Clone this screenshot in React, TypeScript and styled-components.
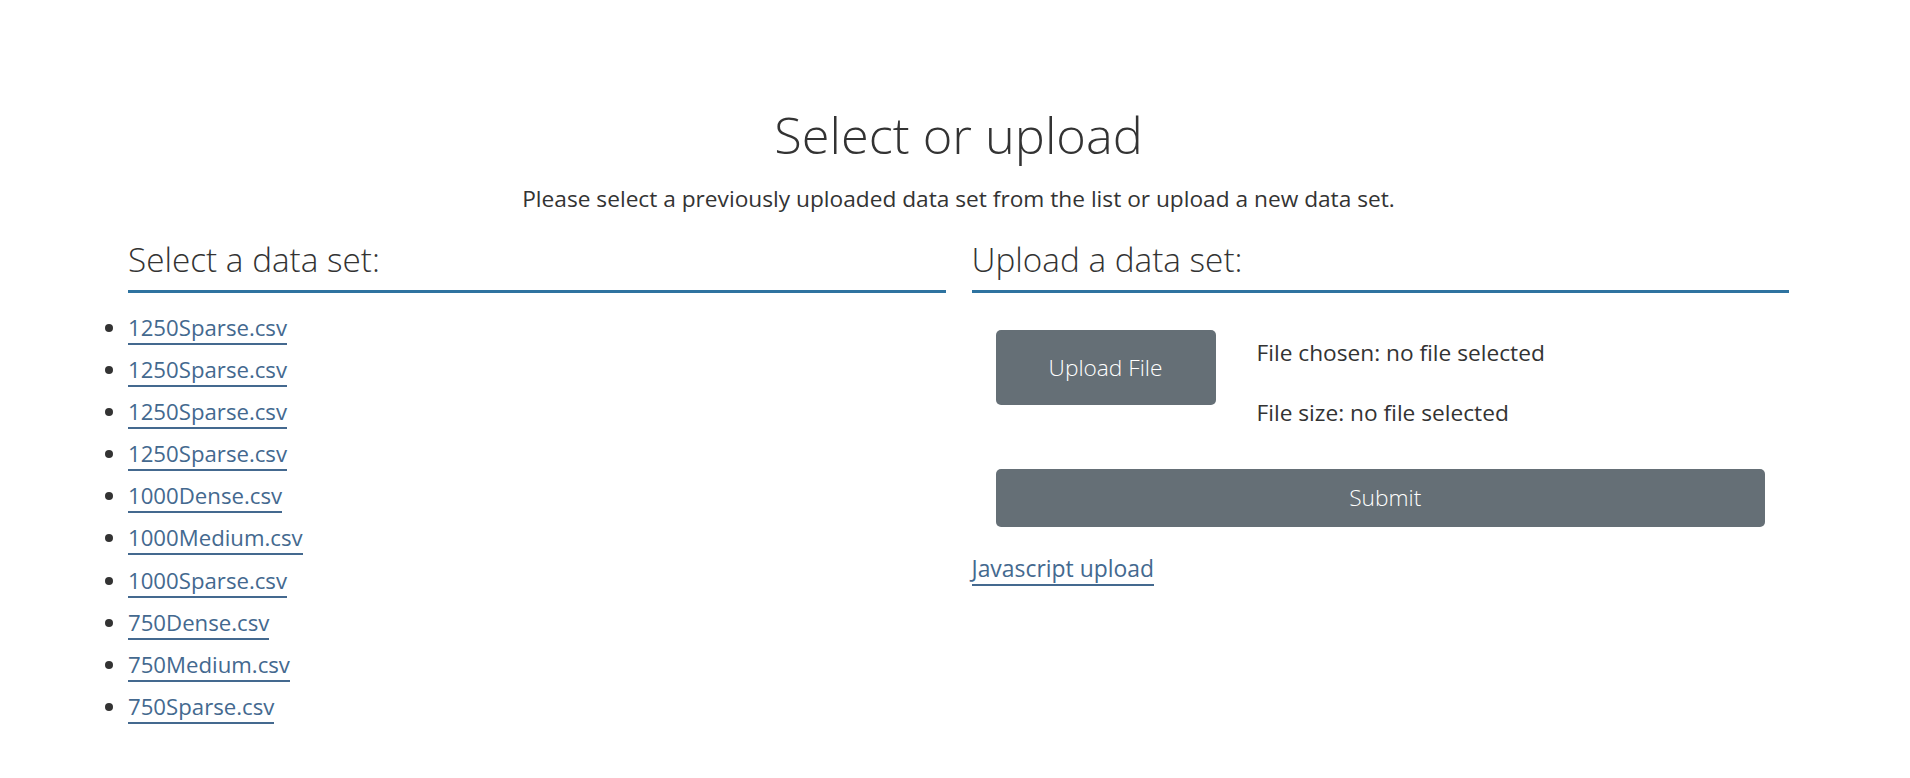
import styled, { createGlobalStyle } from 'styled-components';

const GlobalStyle = createGlobalStyle`
  body {
    margin: 0;
    background: #fff;
    color: #333;
    font-family: 'Open Sans', 'Noto Sans', sans-serif;
  }
`;

const dataSets = [
  '1250Sparse.csv',
  '1250Sparse.csv',
  '1250Sparse.csv',
  '1250Sparse.csv',
  '1000Dense.csv',
  '1000Medium.csv',
  '1000Sparse.csv',
  '750Dense.csv',
  '750Medium.csv',
  '750Sparse.csv',
];

function App() {
  return (
    <Page>
      <GlobalStyle />
      <Title>Select or upload</Title>
      <Lead>Please select a previously uploaded data set from the list or upload a new data set.</Lead>
      <Columns>
        <section>
          <SectionHeading>Select a data set:</SectionHeading>
          <DataList>
            {dataSets.map((name, i) => (
              <li key={i}>
                <Link href="#">{name}</Link>
              </li>
            ))}
          </DataList>
        </section>
        <section>
          <SectionHeading>Upload a data set:</SectionHeading>
          <UploadForm>
            <FileRow>
              <Button className="upload" type="button">
                Upload File
              </Button>
              <FileInfo>
                <div>File chosen: no file selected</div>
                <div>File size: no file selected</div>
              </FileInfo>
            </FileRow>
            <Button className="submit" type="button">
              Submit
            </Button>
          </UploadForm>
          <JsLink>
            <Link href="#">Javascript upload</Link>
          </JsLink>
        </section>
      </Columns>
    </Page>
  );
}

const Page = styled.div`
  padding: 104px 121px 40px 128px;
`;

const Title = styled.h1`
  margin: 0;
  text-align: center;
  font-size: 50.5px;
  font-weight: 300;
  line-height: 61px;
  color: #333;
`;

const Lead = styled.p`
  margin: 19px 0 0;
  text-align: center;
  font-size: 22.7px;
  line-height: 30px;
`;

const Columns = styled.div`
  display: grid;
  grid-template-columns: 1fr 1fr;
  column-gap: 26px;
  margin-top: 25px;
`;

const SectionHeading = styled.h3`
  margin: 0;
  padding-bottom: 10px;
  font-size: 33.3px;
  font-weight: 300;
  line-height: 41px;
  border-bottom: 3px solid #2e73a0;
`;

const DataList = styled.ul`
  margin: 14px 0 0;
  padding: 0;
  list-style: disc;
  font-size: 22.2px;

  li {
    line-height: 42.1px;
  }
  li::marker {
    color: #333;
  }
`;

const Link = styled.a`
  color: #44698f;
  text-decoration: none;
  border-bottom: 2px solid #44698f;
`;

const UploadForm = styled.div`
  padding: 37px 24px 0;
  display: flex;
  flex-direction: column;
`;

const FileRow = styled.div`
  display: flex;
  align-items: flex-start;
  gap: 41px;
`;

const Button = styled.button`
  border: none;
  border-radius: 5px;
  background: #656f76;
  color: #fff;
  font-family: 'Open Sans', 'Noto Sans', sans-serif;
  font-weight: 300;
  font-size: 22.7px;
  cursor: pointer;

  &.upload {
    width: 220px;
    height: 75px;
  }
  &.submit {
    margin-top: 40px;
    width: 100%;
    height: 58px;
    padding-left: 16px;
  }
`;

const FileInfo = styled.div`
  display: flex;
  flex-direction: column;
  gap: 26.5px;
  padding-top: 6px;
  font-size: 22.7px;
  line-height: 33px;
`;

const JsLink = styled.div`
  margin-top: 25px;
  font-size: 22.9px;
  line-height: 33px;
`;

export default App;
